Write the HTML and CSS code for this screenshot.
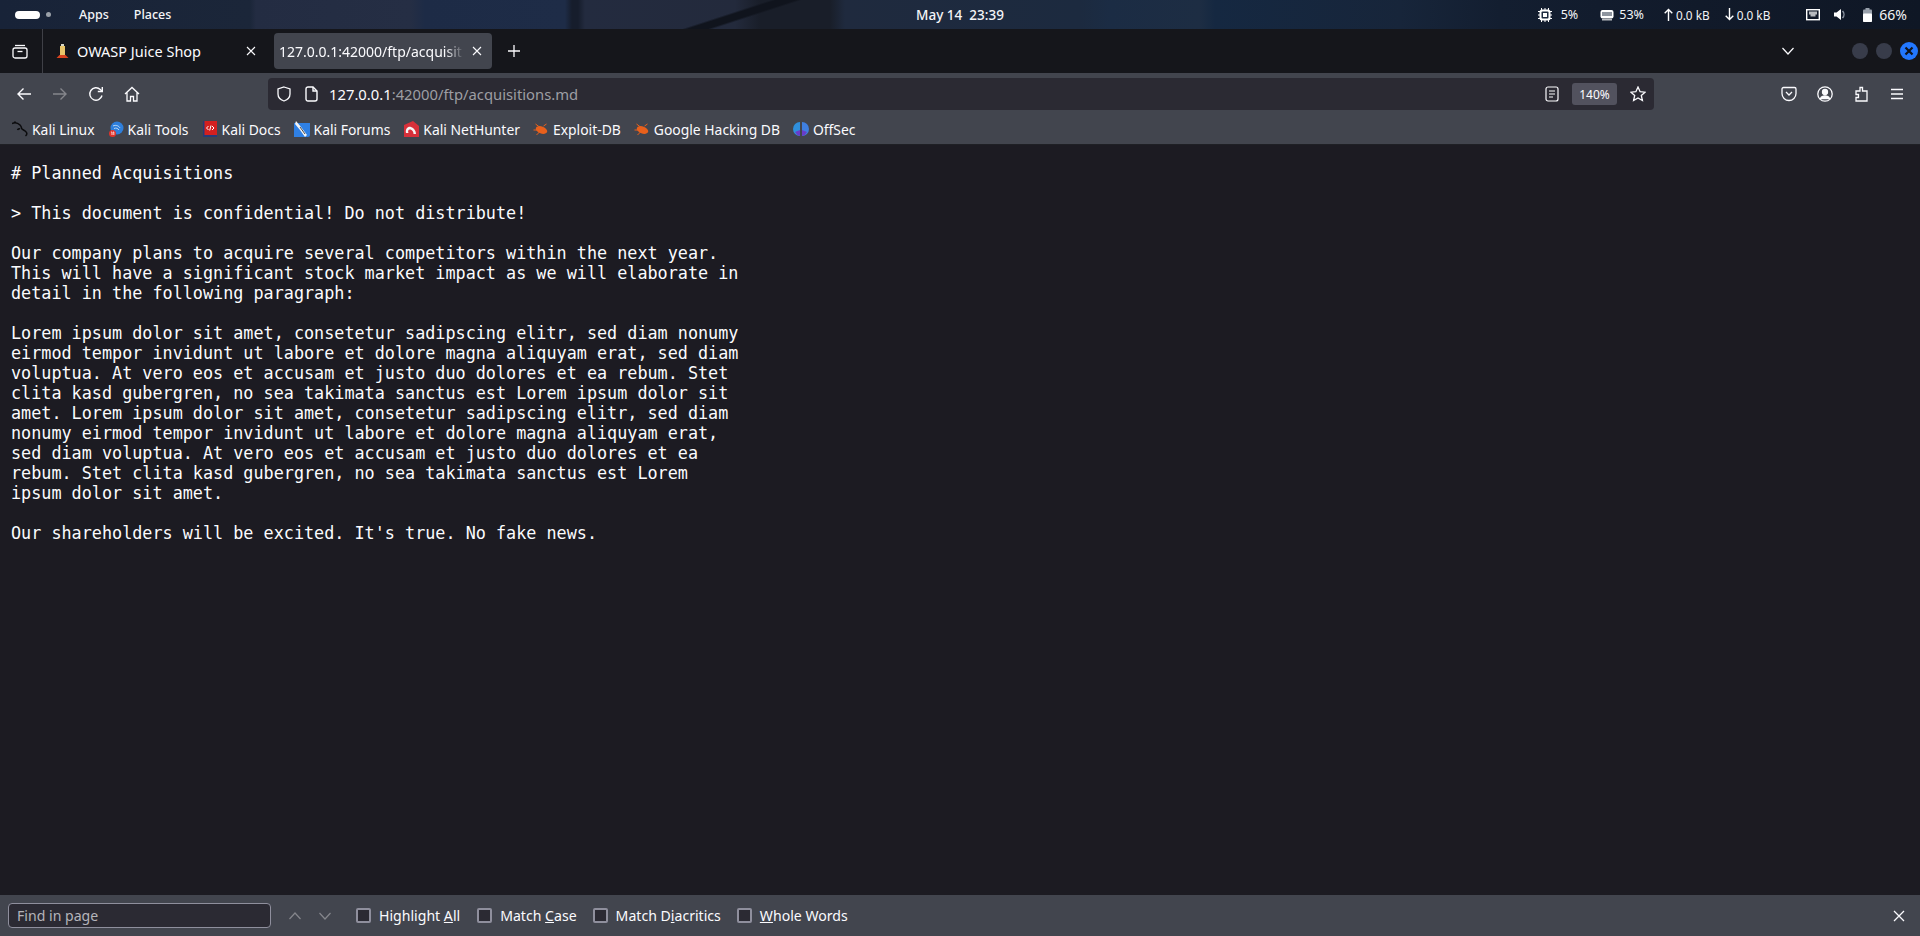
FILE: index.html
```html
<!DOCTYPE html>
<html lang="en">
<head>
  <meta charset="UTF-8" />
  <title>127.0.0.1:42000/ftp/acquisitions.md</title>
  <link rel="stylesheet" href="styles.css">
</head>
<body>
  <header class="panel">
    <div class="panel-left">
      <span class="pill"></span>
      <span class="dot"></span>
      <span class="apps">Apps</span>
      <span class="places">Places</span>
    </div>
    <div class="clock">May 14&nbsp;&nbsp;23:39</div>
    <div class="panel-right">
      <svg class="st cpu" width="14" height="14" viewBox="0 0 14 14"><path d="M2 3.500H0M2 7H0M2 10.500H0M12 3.500h2M12 7h2M12 10.500h2M3.500 2V0M7 2V0M10.500 2V0M3.500 12v2M7 12v2M10.500 12v2" stroke="#fff"/><rect x="1.500" y="1.500" width="11" height="11" rx="2.500" fill="#fff"/><rect x="3.500" y="3.500" width="7" height="7" rx="1" fill="#1c2a3f"/><rect x="5" y="5" width="4" height="4" fill="#fff"/></svg>
      <span class="st-5">5%</span>
      <svg class="st ram" width="14" height="12" viewBox="0 0 14 12"><rect x="0.500" y="1" width="13" height="8.500" rx="2" fill="#fff"/><path d="M3 3v4M5 3v4M7 3v4M9 3v4M11 3v4" stroke="#1c2a3f"/><path d="M2 10h10v1.500H2z" fill="#fff" opacity=".7"/></svg>
      <span class="st-53">53%</span>
      <svg class="up-a" width="9" height="13" viewBox="0 0 9 13" fill="none" stroke="#fff" stroke-width="1.400"><path d="M4.500 13V1.500M.7 5.300l3.800-3.800 3.800 3.800"/></svg>
      <span class="kb">0.0 kB</span>
      <svg class="dn-a" width="9" height="13" viewBox="0 0 9 13" fill="none" stroke="#fff" stroke-width="1.400"><path d="M4.500 0v11.500M.7 7.700l3.800 3.800 3.800-3.800"/></svg>
      <span class="kb">0.0 kB</span>
      <svg class="st net" width="14" height="12" viewBox="0 0 14 12"><rect x="0.700" y="0.700" width="12.600" height="10" fill="none" stroke="#fff" stroke-width="1.400"/><path d="M3 2.500h8v3H9.500v2h-5v-2H3z" fill="#fff" opacity=".7"/></svg>
      <svg class="st vol" width="13" height="13" viewBox="0 0 13 13"><path d="M0 4.500h2.500L7 1v11L2.500 8.500H0z" fill="#fff"/><path d="M8.500 3a5 5 0 0 1 0 7" fill="none" stroke="#8b93a0" stroke-width="1.500"/></svg>
      <svg class="st bat" width="9" height="14" viewBox="0 0 9 14"><rect x="2.500" y="0" width="4" height="2" fill="#98a0ab"/><rect x="0" y="1.500" width="9" height="12.500" rx="1" fill="#98a0ab"/><rect x="0" y="5.500" width="9" height="8.500" rx="1" fill="#fff"/></svg>
      <span class="bat-pct">66%</span>
    </div>
  </header>

  <nav class="tabbar">
    <div class="side-btn">
      <svg width="16" height="16" viewBox="0 0 16 16" fill="none" stroke="#fbfbfe" stroke-width="1.300"><rect x="1" y="5" width="14" height="10" rx="2"/><path d="M3 2.500h10"/><path d="M5.500 8.500h5"/></svg>
    </div>
    <div class="tab tab-plain">
      <svg class="fav" width="16" height="16" viewBox="0 0 16 16"><path d="M5 3h5v9H5z" fill="#e8c56a"/><path d="M6 1h3v2H6z" fill="#d8d8c8"/><path d="M1.500 15l3-3h6l3 3z" fill="#d8431f"/></svg>
      <span class="tab-title">OWASP Juice Shop</span>
      <svg class="tab-x" width="12" height="12" viewBox="0 0 12 12" stroke="#fbfbfe" stroke-width="1.100"><path d="M2 2l8 8M10 2l-8 8"/></svg>
    </div>
    <div class="tab tab-active">
      <span class="tab-title fade">127.0.0.1:42000/ftp/acquisit</span>
      <svg class="tab-x" width="12" height="12" viewBox="0 0 12 12" stroke="#fbfbfe" stroke-width="1.100"><path d="M2 2l8 8M10 2l-8 8"/></svg>
    </div>
    <svg class="plus" width="14" height="14" viewBox="0 0 14 14" stroke="#fbfbfe" stroke-width="1.300"><path d="M7 1v12M1 7h12"/></svg>
    <div class="tabbar-right">
      <svg class="chev" width="14" height="10" viewBox="0 0 14 10" fill="none" stroke="#fbfbfe" stroke-width="1.200"><path d="M1.500 2l5.500 6 5.500-6"/></svg>
      <span class="win"></span>
      <span class="win"></span>
      <span class="win win-close"><svg width="10" height="10" viewBox="0 0 10 10" stroke="#10131a" stroke-width="2.200"><path d="M1.500 1.500l7 7M8.500 1.500l-7 7"/></svg></span>
    </div>
  </nav>

  <div class="toolbar">
    <svg class="tool first" width="16" height="16" viewBox="0 0 16 16" fill="none" stroke="#fbfbfe" stroke-width="1.400"><path d="M15 8H2M7.500 2.500L2 8l5.500 5.500"/></svg>
    <svg class="tool" width="16" height="16" viewBox="0 0 16 16" fill="none" stroke="#85868c" stroke-width="1.400"><path d="M1 8h13M8.500 2.500L14 8l-5.500 5.500"/></svg>
    <svg class="tool" width="16" height="16" viewBox="0 0 16 16" fill="none" stroke="#fbfbfe" stroke-width="1.400"><path d="M14 9.500A6.200 6.200 0 1 1 12.300 3.500L14.300 5.500"/><path d="M14.300 1v4.500H9.800"/></svg>
    <svg class="tool" width="16" height="16" viewBox="0 0 16 16" fill="none" stroke="#fbfbfe" stroke-width="1.300"><path d="M1 8l7-6.500L15 8M3 6.500V15h3.500v-4.500h3V15H13V6.500"/></svg>
    <div class="urlbar">
      <svg class="shield" width="16" height="16" viewBox="0 0 16 16" fill="none" stroke="#fbfbfe" stroke-width="1.300"><path d="M8 1l6 2v5c0 3.500-3 6-6 7-3-1-6-3.500-6-7V3z"/></svg>
      <svg class="doc" width="13" height="16" viewBox="0 0 13 16" fill="none" stroke="#fbfbfe" stroke-width="1.400"><path d="M1 3a2 2 0 0 1 2-2h5l4 4v8a2 2 0 0 1-2 2H3a2 2 0 0 1-2-2z"/><path d="M8 1v4h4"/></svg>
      <span class="url"><span class="host">127.0.0.1</span>:42000/ftp/acquisitions.md</span>
      <svg class="reader" width="14" height="16" viewBox="0 0 14 16" fill="none" stroke="#fbfbfe" stroke-width="1.200"><rect x="1" y="1" width="12" height="14" rx="2"/><path d="M4 5h6M4 8h6M4 11h4"/></svg>
      <span class="zoom-level">140%</span>
      <svg class="star" width="16" height="16" viewBox="0 0 16 16" fill="none" stroke="#fbfbfe" stroke-width="1.300"><path d="M8 1l2.100 4.700 5 .5-3.800 3.300 1.100 5L8 11.900l-4.400 2.600 1.100-5L.9 6.200l5-.5z"/></svg>
    </div>
    <div class="tool-right">
      <svg width="16" height="16" viewBox="0 0 16 16" fill="none" stroke="#fbfbfe" stroke-width="1.300"><path d="M1 3a1.500 1.500 0 0 1 1.500-1.500h11A1.500 1.500 0 0 1 15 3v4.500a7 7 0 0 1-14 0z"/><path d="M5 6l3 3 3-3"/></svg>
      <svg width="16" height="16" viewBox="0 0 16 16" fill="none" stroke="#fbfbfe" stroke-width="1.300"><circle cx="8" cy="8" r="7.200"/><circle cx="8" cy="6" r="2.500" fill="#fbfbfe"/><path d="M3.500 12.500c1-2 2.500-2.500 4.500-2.500s3.500.5 4.500 2.500z" fill="#fbfbfe"/></svg>
      <svg width="16" height="16" viewBox="0 0 16 16" fill="none" stroke="#fbfbfe" stroke-width="1.300"><path d="M7 1.500h2.500V5H14v10H3v-3.500h2.500v-3H3V5h4z"/></svg>
      <svg width="16" height="16" viewBox="0 0 16 16" stroke="#fbfbfe" stroke-width="1.300"><path d="M2 3.500h12M2 8h12M2 12.500h12"/></svg>
    </div>
  </div>

  <div class="bookmarks">
    <span class="bm"><svg width="16" height="16" viewBox="0 0 16 16" fill="none" stroke="#0b0b0d" stroke-width="1.500"><path d="M0 2.500c3-1.500 6-.5 8 1.500s1 3 2 4 3.500 1.500 4.500 3.500-1 3.500-1 3.500M3.500 2L2.500.5M8 8c-1-.5-2 0-2.500 1"/></svg>Kali Linux</span>
    <span class="bm"><svg width="16" height="16" viewBox="0 0 16 16"><circle cx="9" cy="7" r="6.500" fill="#2e7fdc"/><path d="M5 5c3-1.500 6 0 7 2M6 7.500c2-1 4 0 5 1.500" stroke="#bcd8f5" fill="none"/><rect x="1" y="9" width="7" height="7" rx="3.500" fill="#e0332b"/><path d="M3.200 11h.8v3M5 11h.8v3" stroke="#fff" fill="none" stroke-width=".8"/></svg>Kali Tools</span>
    <span class="bm"><svg width="16" height="16" viewBox="0 0 14 16"><rect width="14" height="16" fill="#263a78"/><rect x="1.500" y="0" width="12.500" height="14" fill="#d3201f"/><path d="M5.500 5L3.500 7l2 2M9 5l2 2-2 2M8 4.500L6.700 9.500" stroke="#fff" fill="none"/></svg>Kali Docs</span>
    <span class="bm"><svg width="16" height="16" viewBox="0 0 16 16"><path d="M0 2h16v12a2 2 0 0 1-2 2H0z" fill="#2f80e4"/><path d="M2 0l5 6 6 8-2 2-5-7-5-6z" fill="#f4f4f4"/><path d="M6 6l5 7" stroke="#222" stroke-width=".8"/></svg>Kali Forums</span>
    <span class="bm"><svg width="16" height="16" viewBox="0 0 16 16"><path d="M1 4l9-4 6 5v11H1z" fill="#d7303a"/><path d="M3 12c-1-4 2-7 5-6s5 4 5 7h-2.500c0-2-1-4-3-4.500S4.500 10 5.500 12z" fill="#f5f5f5"/></svg>Kali NetHunter</span>
    <span class="bm"><svg width="16" height="16" viewBox="0 0 15 16"><ellipse cx="8" cy="9" rx="6" ry="3.500" transform="rotate(20 8 9)" fill="#e8601c"/><path d="M2 3l4 3M0 9h4M3 14l3-3M10 5l3-2" stroke="#e8601c"/></svg>Exploit-DB</span>
    <span class="bm"><svg width="16" height="16" viewBox="0 0 15 16"><ellipse cx="8" cy="9" rx="6" ry="3.500" transform="rotate(20 8 9)" fill="#e8601c"/><path d="M2 3l4 3M0 9h4M3 14l3-3M10 5l3-2" stroke="#e8601c"/></svg>Google Hacking DB</span>
    <span class="bm"><svg width="16" height="16" viewBox="0 0 16 16"><path d="M7 1a7 7 0 0 0 0 14z" fill="#2f8fdc"/><path d="M9 1a7 7 0 0 1 0 14z" fill="#3f7fe0"/><path d="M7 9v6a7 7 0 0 1-5-4zM9 9v6a7 7 0 0 0 5-4z" fill="#6a3bc8"/></svg>OffSec</span>
  </div>

  <main class="content">
<pre># Planned Acquisitions

&gt; This document is confidential! Do not distribute!

Our company plans to acquire several competitors within the next year.
This will have a significant stock market impact as we will elaborate in
detail in the following paragraph:

Lorem ipsum dolor sit amet, consetetur sadipscing elitr, sed diam nonumy
eirmod tempor invidunt ut labore et dolore magna aliquyam erat, sed diam
voluptua. At vero eos et accusam et justo duo dolores et ea rebum. Stet
clita kasd gubergren, no sea takimata sanctus est Lorem ipsum dolor sit
amet. Lorem ipsum dolor sit amet, consetetur sadipscing elitr, sed diam
nonumy eirmod tempor invidunt ut labore et dolore magna aliquyam erat,
sed diam voluptua. At vero eos et accusam et justo duo dolores et ea
rebum. Stet clita kasd gubergren, no sea takimata sanctus est Lorem
ipsum dolor sit amet.

Our shareholders will be excited. It's true. No fake news.
</pre>
  </main>

  <footer class="findbar">
    <div class="find-input">Find in page</div>
    <svg class="find-up" width="14" height="10" viewBox="0 0 14 10" fill="none" stroke="#85868c" stroke-width="1.200"><path d="M1.500 8L7 2l5.500 6"/></svg>
    <svg class="find-down" width="14" height="10" viewBox="0 0 14 10" fill="none" stroke="#85868c" stroke-width="1.200"><path d="M1.500 2L7 8l5.500-6"/></svg>
    <span class="check c1"></span><span class="lbl">Highlight <u>A</u>ll</span>
    <span class="check c2"></span><span class="lbl">Match <u>C</u>ase</span>
    <span class="check c3"></span><span class="lbl">Match D<u>i</u>acritics</span>
    <span class="check c4"></span><span class="lbl"><u>W</u>hole Words</span>
    <svg class="find-close" width="12" height="12" viewBox="0 0 12 12" stroke="#fbfbfe" stroke-width="1.300"><path d="M1 1l10 10M11 1L1 11"/></svg>
  </footer>
</body>
</html>
```

FILE: styles.css
```css
* {
  box-sizing: border-box;
}

html, body {
  height: 100%;
}

body {
  margin: 0;
  display: flex;
  flex-direction: column;
  height: 936px;
  overflow: hidden;
  background-color: #1c1b22;
  color: #fbfbfe;
  font-family: "Noto Sans", sans-serif;
  font-size: 14px;
}

svg {
  flex: none;
  display: block;
}

/* desktop panel, the wallpaper shows through here */
.panel {
  flex: 0 0 29px;
  display: grid;
  grid-template-columns: 1fr auto 1fr;
  align-items: center;
  font-size: 12.500px;
  color: #f4f5f7;
  background-color: #1b2436;
  background-image:
    linear-gradient(162deg, transparent 0 238px, #10141d 240px 246px, transparent 248px),
    linear-gradient(90deg,
      #182338 0, #1b2639 250px,
      #232c42 256px, #252e44 410px,
      #1d2b46 425px, #1e2c47 565px,
      #161d2c 572px 578px,
      #232b3f 585px, #232a3c 735px,
      #191e29 760px 830px,
      #1f2a3e 845px, #1c2a3f 1080px,
      #1b2c44 1110px, #1d2d43 1200px,
      #152841 1215px, #17253a 1400px,
      #131e30 1500px, #111a2a 1700px, #0f1725 1920px);
}

.panel-left, .panel-right {
  display: flex;
  align-items: center;
}

.pill {
  width: 25px;
  height: 8px;
  margin-left: 15px;
  border-radius: 4px;
  background-color: #fff;
}

.dot {
  width: 5px;
  height: 5px;
  margin-left: 6px;
  border-radius: 50%;
  background-color: #9aa0a8;
}

.apps {
  margin-left: 28px;
  font-weight: 500;
}

.places {
  margin-left: 25px;
  font-weight: 500;
}

.panel-right {
  justify-content: flex-end;
  padding-right: 13px;
}

.clock {
  font-size: 13.500px;
  font-weight: 500;
}

.st-5 { margin-left: 9px; }
.ram { margin-left: 22px; }
.st-53 { margin-left: 5px; }
.up-a { margin-left: 20px; }
.kb { margin-left: 3px; font-size: 11.800px; }
.dn-a { margin-left: 15px; }
.net { margin-left: 36px; }
.vol { margin-left: 14px; }
.bat { margin-left: 16px; }
.bat-pct { margin-left: 7px; font-size: 14px; }

/* tab strip */
.tabbar {
  flex: 0 0 44px;
  display: flex;
  align-items: center;
  background-color: #15161b;
}

.side-btn {
  width: 43px;
  height: 44px;
  display: flex;
  align-items: center;
  padding-left: 12px;
  border-right: 1px solid #3f4047;
}

.tab {
  height: 36px;
  display: flex;
  align-items: center;
  border-radius: 4px;
  font-size: 14.500px;
}

.tab-plain {
  width: 231px;
  padding: 0 0 0 12px;
}

.tab-plain .tab-title {
  margin-left: 6px;
  flex: 1;
}

.tab-plain .tab-x {
  margin-right: 17px;
}

.tab-active {
  width: 218px;
  padding-left: 5px;
  background-color: #42454e;
}

.fade {
  width: 185px;
  font-size: 14px;
  white-space: nowrap;
  -webkit-mask-image: linear-gradient(90deg, #000 90%, transparent);
  mask-image: linear-gradient(90deg, #000 90%, transparent);
}

.tab-active .tab-x {
  margin-left: 7px;
}

.plus {
  margin-left: 15px;
}

.tabbar-right {
  margin-left: auto;
  display: flex;
  align-items: center;
}

.chev {
  margin-right: 57px;
}

.win {
  width: 16px;
  height: 16px;
  margin-right: 8px;
  border-radius: 50%;
  background-color: #383c4a;
}

.win-close {
  width: 18px;
  height: 18px;
  margin-right: 2px;
  display: flex;
  align-items: center;
  justify-content: center;
  background-color: #2277ff;
}

/* nav toolbar */
.toolbar {
  flex: 0 0 45px;
  display: flex;
  align-items: center;
  padding-bottom: 3px;
  background-color: #42454e;
}

.tool {
  margin-right: 20px;
}

.tool.first {
  margin-left: 16px;
}

.urlbar {
  width: 1386px;
  height: 32px;
  margin-left: 108px;
  display: flex;
  align-items: center;
  border-radius: 4px;
  background-color: #2b2a33;
  font-size: 14.800px;
}

.shield {
  margin-left: 8px;
}

.doc {
  margin-left: 13px;
}

.url {
  margin-left: 11px;
  color: #9d9ea3;
}

.host {
  color: #fbfbfe;
}

.reader {
  margin-left: auto;
}

.zoom-level {
  width: 45px;
  height: 22px;
  margin-left: 13px;
  display: flex;
  align-items: center;
  justify-content: center;
  border-radius: 3px;
  background-color: #52525e;
  font-size: 12px;
}

.star {
  margin: 0 8px 0 13px;
}

.tool-right {
  display: flex;
  gap: 20px;
  margin-left: 127px;
}

/* bookmarks */
.bookmarks {
  flex: 0 0 27px;
  display: flex;
  align-items: center;
  padding: 0 0 4px 12px;
  background-color: #42454e;
  border-bottom: 1px solid #1f2025;
  font-size: 13.900px;
}

.bm {
  display: flex;
  align-items: center;
  gap: 4px;
  margin-right: 13px;
}

/* document */
.content {
  flex: 1;
  min-height: 0;
  padding: 0 11px;
}

.content pre {
  margin: 18px 0 0;
  font-family: "DejaVu Sans Mono", monospace;
  font-size: 16.800px;
  line-height: 20px;
}

/* find bar */
.findbar {
  flex: 0 0 41px;
  display: flex;
  align-items: center;
  padding-left: 8px;
  background-color: #42454e;
  font-size: 14.100px;
}

.find-input {
  width: 263px;
  height: 25px;
  display: flex;
  align-items: center;
  padding-left: 8px;
  border: 1px solid #8f8f9d;
  border-radius: 4px;
  background-color: #2b2a33;
  color: #b4b4ba;
}

.find-up {
  margin-left: 17px;
}

.find-down {
  margin-left: 16px;
}

.check {
  width: 15px;
  height: 15px;
  margin-right: 8px;
  border: 2px solid #8f8f9d;
  border-radius: 2px;
  background-color: #2b2a33;
}

.c1 { margin-left: 24px; }
.c2 { margin-left: 17px; }
.c3 { margin-left: 16px; }
.c4 { margin-left: 16px; }

.find-close {
  margin-left: auto;
  margin-right: 15px;
}
```
